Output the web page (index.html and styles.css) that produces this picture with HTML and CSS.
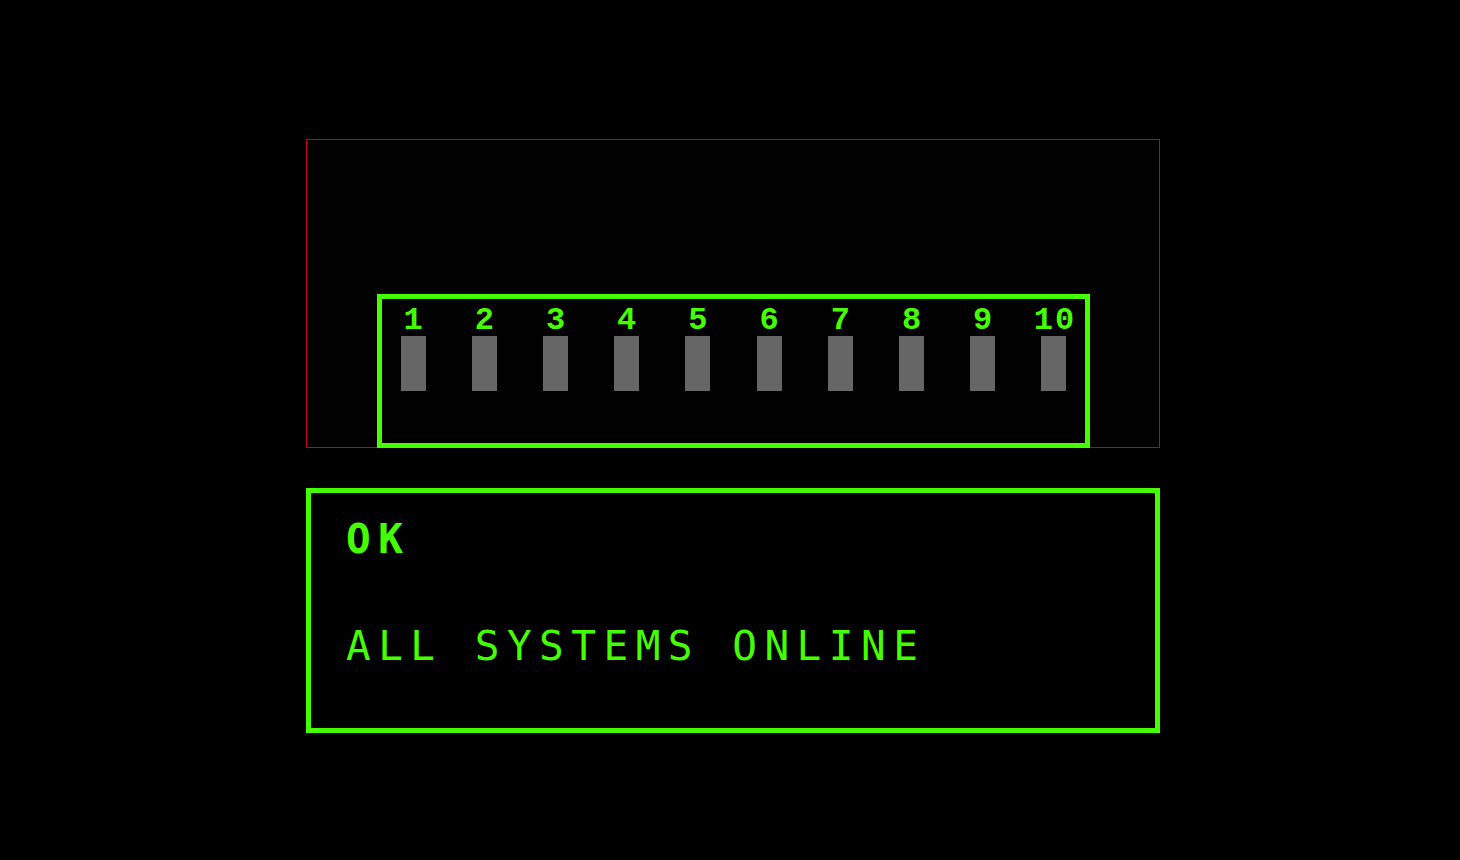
FILE: index.html
```html
<!DOCTYPE html>
<html lang="en">
<head>
<meta charset="utf-8">
<title>DIP Switch Status</title>
<link rel="stylesheet" href="styles.css">
</head>
<body>
<main class="wrap">
  <section class="panel">
    <div class="dip">
      <div class="sw"><span class="num">1</span><span class="lever"></span></div>
      <div class="sw"><span class="num">2</span><span class="lever"></span></div>
      <div class="sw"><span class="num">3</span><span class="lever"></span></div>
      <div class="sw"><span class="num">4</span><span class="lever"></span></div>
      <div class="sw"><span class="num">5</span><span class="lever"></span></div>
      <div class="sw"><span class="num">6</span><span class="lever"></span></div>
      <div class="sw"><span class="num">7</span><span class="lever"></span></div>
      <div class="sw"><span class="num">8</span><span class="lever"></span></div>
      <div class="sw"><span class="num">9</span><span class="lever"></span></div>
      <div class="sw"><span class="num">10</span><span class="lever"></span></div>
    </div>
  </section>
  <section class="status">
    <div class="code">OK</div>
    <div class="msg">ALL SYSTEMS ONLINE</div>
  </section>
</main>
</body>
</html>
```

FILE: styles.css
```css
html, body {
  margin: 0;
  padding: 0;
  background: #000;
}

body {
  width: 1460px;
  height: 860px;
  overflow: hidden;
  font-family: "DejaVu Sans Mono", "Liberation Mono", monospace;
  color: #44ff00;
}

.wrap {
  width: 854px;
  margin: 139px 0 0 306px;
  display: flex;
  flex-direction: column;
  gap: 40px;
}

.panel {
  box-sizing: border-box;
  height: 309px;
  border: 1px solid #c8001c;
  background: #010101;
  display: flex;
  justify-content: center;
  align-items: flex-end;
}

.dip {
  box-sizing: border-box;
  width: 713px;
  height: 154px;
  margin-bottom: -1px;
  box-shadow: inset 0 0 0 5px #44ff00;
  display: grid;
  grid-template-columns: repeat(10, 1fr);
  padding: 12px 0 0 1px;
}

.sw {
  display: flex;
  flex-direction: column;
  align-items: center;
}

.num {
  font-family: "Liberation Mono", "DejaVu Sans Mono", monospace;
  font-weight: bold;
  font-size: 32px;
  line-height: 30px;
  letter-spacing: 2px;
  text-indent: 2px;
}

.lever {
  width: 25px;
  height: 55px;
  background: #666;
}

.status {
  box-sizing: border-box;
  height: 245px;
  border: 5px solid #44ff00;
  padding: 26px 35px 0;
}

.code {
  font-weight: bold;
  font-size: 41px;
  line-height: 40px;
  letter-spacing: 7.5px;
}

.msg {
  margin-top: 67px;
  font-size: 41px;
  line-height: 40px;
  letter-spacing: 7.5px;
}
```
